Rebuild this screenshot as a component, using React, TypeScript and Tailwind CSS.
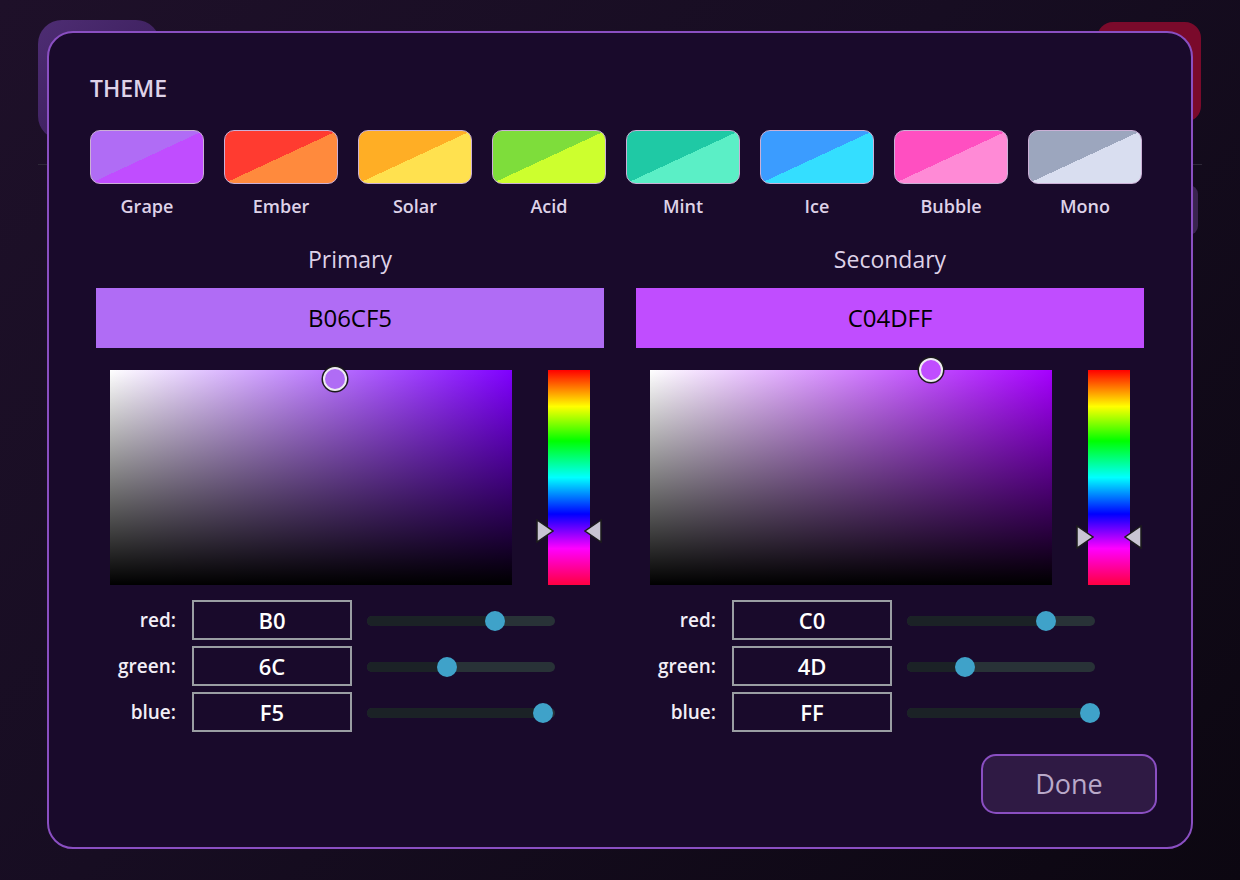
import React from "react"

const font = { fontFamily: '"Open Sans", "DejaVu Sans", sans-serif' }

const themes = [
  { name: "Grape", a: "#B06CF5", b: "#C04DFF" },
  { name: "Ember", a: "#FF3B30", b: "#FF8A3D" },
  { name: "Solar", a: "#FFAE25", b: "#FFE14F" },
  { name: "Acid", a: "#7EDD3B", b: "#CDFF2E" },
  { name: "Mint", a: "#1FC9A5", b: "#5BEFC6" },
  { name: "Ice", a: "#3B9CFF", b: "#34DEFF" },
  { name: "Bubble", a: "#FF4FC1", b: "#FF8AD6" },
  { name: "Mono", a: "#9CA6BE", b: "#D9DEF0" },
]

type Channel = { label: string; hex: string; value: number }

interface PickerProps {
  title: string
  hex: string
  hue: number
  sat: number
  val: number
  channels: Channel[]
}

function Swatch({ name, a, b }: { name: string; a: string; b: string }) {
  return (
    <div className="flex w-[114px] flex-col items-center">
      <div
        className="h-[54px] w-[114px] rounded-[10px] border border-[#cbb0d6]"
        style={{ background: `linear-gradient(to bottom right, ${a} 50%, ${b} 50%)` }}
      />
      <div className="mt-[11px] text-[18px] font-semibold leading-[22px] text-[#ded2e8]">{name}</div>
    </div>
  )
}

function Slider({ value }: { value: number }) {
  const center = 4 + value * 0.702
  return (
    <div className="relative h-[10px] w-[188px] rounded-full bg-[#283237]">
      <div className="absolute left-0 top-0 h-[10px] rounded-full bg-[#1b2226]" style={{ width: center }} />
      <div
        className="absolute top-[-5px] h-[20px] w-[20px] rounded-full bg-[#3fa2c9]"
        style={{ left: center - 10 }}
      />
    </div>
  )
}

function Picker({ title, hex, hue, sat, val, channels }: PickerProps) {
  const hueColor = `hsl(${hue}, 100%, 50%)`
  return (
    <div className="flex w-[508px] flex-col">
      <div className="text-center text-[23px] leading-[28px] text-[#ded2e8]">{title}</div>
      <div
        className="mt-[15px] flex h-[60px] items-center justify-center text-[24px] text-black"
        style={{ background: `#${hex}` }}
      >
        {hex}
      </div>

      <div className="mt-[22px] flex px-[14px]">
        <div className="relative h-[215px] w-[402px]">
          <div
            className="absolute inset-0"
            style={{ background: `linear-gradient(to right, #ffffff, ${hueColor})` }}
          />
          <div className="absolute inset-0 bg-gradient-to-b from-transparent to-black" />
          <div
            className="absolute h-[24px] w-[24px] rounded-full border-[2px] border-[#eeeaf2] shadow-[0_0_0_1.5px_#1a1a1a]"
            style={{ left: `calc(${sat * 100}% - 12px)`, top: `calc(${(1 - val) * 100}% - 12px)`, background: `#${hex}` }}
          />
        </div>

        <div className="relative ml-[36px] h-[215px] w-[42px]">
          <div className="absolute inset-0 bg-[linear-gradient(to_bottom,#ff0000_0%,#ffff00_17%,#00ff00_33%,#00ffff_50%,#0000ff_67%,#ff00ff_83%,#ff0040_100%)]" />
          <svg
            className="absolute left-[-12px]"
            style={{ top: `calc(${(hue / 360) * 100}% - 12px)` }}
            width="18"
            height="24"
            viewBox="0 0 18 24"
          >
            <polygon points="1,1 17,12 1,23" fill="#c9c5d3" stroke="#1c1c1c" strokeWidth="1.5" />
          </svg>
          <svg
            className="absolute right-[-12px]"
            style={{ top: `calc(${(hue / 360) * 100}% - 12px)` }}
            width="18"
            height="24"
            viewBox="0 0 18 24"
          >
            <polygon points="17,1 1,12 17,23" fill="#c9c5d3" stroke="#1c1c1c" strokeWidth="1.5" />
          </svg>
        </div>
      </div>

      <div className="mt-[15px] flex flex-col gap-[6px]">
        {channels.map((c) => (
          <div key={c.label} className="flex h-[40px] items-center">
            <div className="w-[80px] text-right text-[19px] font-semibold text-[#f2eef6]">{c.label}:</div>
            <div className="ml-[16px] flex h-[40px] w-[160px] items-center justify-center border-2 border-[#9a9ea3] text-[22px] font-semibold text-white">
              {c.hex}
            </div>
            <div className="ml-[15px] mt-[2px]">
              <Slider value={c.value} />
            </div>
          </div>
        ))}
      </div>
    </div>
  )
}

export default function App() {
  return (
    <div
      className="relative h-[880px] w-[1240px] overflow-hidden bg-[linear-gradient(135deg,#1e1029_0%,#170d22_45%,#0c0711_100%)]"
      style={font}
    >
      {/* stuff behind the modal */}
      <div className="absolute left-[38px] top-[20px] h-[120px] w-[122px] rounded-[24px] bg-[linear-gradient(135deg,#5a3486,#3a1c5e)] opacity-80" />
      <div className="absolute left-[1097px] top-[22px] h-[100px] w-[104px] rounded-[16px] bg-[#7a0a2b]" />
      <div className="absolute left-[1180px] top-[185px] h-[50px] w-[18px] rounded-[10px] bg-[#3a2450]" />
      <div className="absolute left-[38px] top-[164px] h-px w-[1164px] bg-[#2e2838]" />

      <div className="relative ml-[47px] mt-[31px] h-[818px] w-[1146px] rounded-[26px] border-2 border-[#8a4fc2] bg-[#190a2b]">
        <div className="pl-[41px] pt-[41px] text-[23px] font-semibold leading-[28px] text-[#ded2e8]">THEME</div>

        <div className="ml-[41px] mt-[28px] flex gap-[20px]">
          {themes.map((t) => (
            <Swatch key={t.name} {...t} />
          ))}
        </div>

        <div className="ml-[47px] mt-[28px] flex gap-[32px]">
          <Picker
            title="Primary"
            hex="B06CF5"
            hue={270}
            sat={0.559}
            val={0.96}
            channels={[
              { label: "red", hex: "B0", value: 176 },
              { label: "green", hex: "6C", value: 108 },
              { label: "blue", hex: "F5", value: 245 },
            ]}
          />
          <Picker
            title="Secondary"
            hex="C04DFF"
            hue={279}
            sat={0.698}
            val={1}
            channels={[
              { label: "red", hex: "C0", value: 192 },
              { label: "green", hex: "4D", value: 77 },
              { label: "blue", hex: "FF", value: 255 },
            ]}
          />
        </div>

        <div className="mr-[34px] mt-[22px] flex justify-end">
          <button className="flex h-[60px] w-[176px] items-center justify-center rounded-[15px] border-2 border-[#8a4fc2] bg-[#2f1a44] text-[27px] text-[#b9a9c9]">
            Done
          </button>
        </div>
      </div>
    </div>
  )
}
